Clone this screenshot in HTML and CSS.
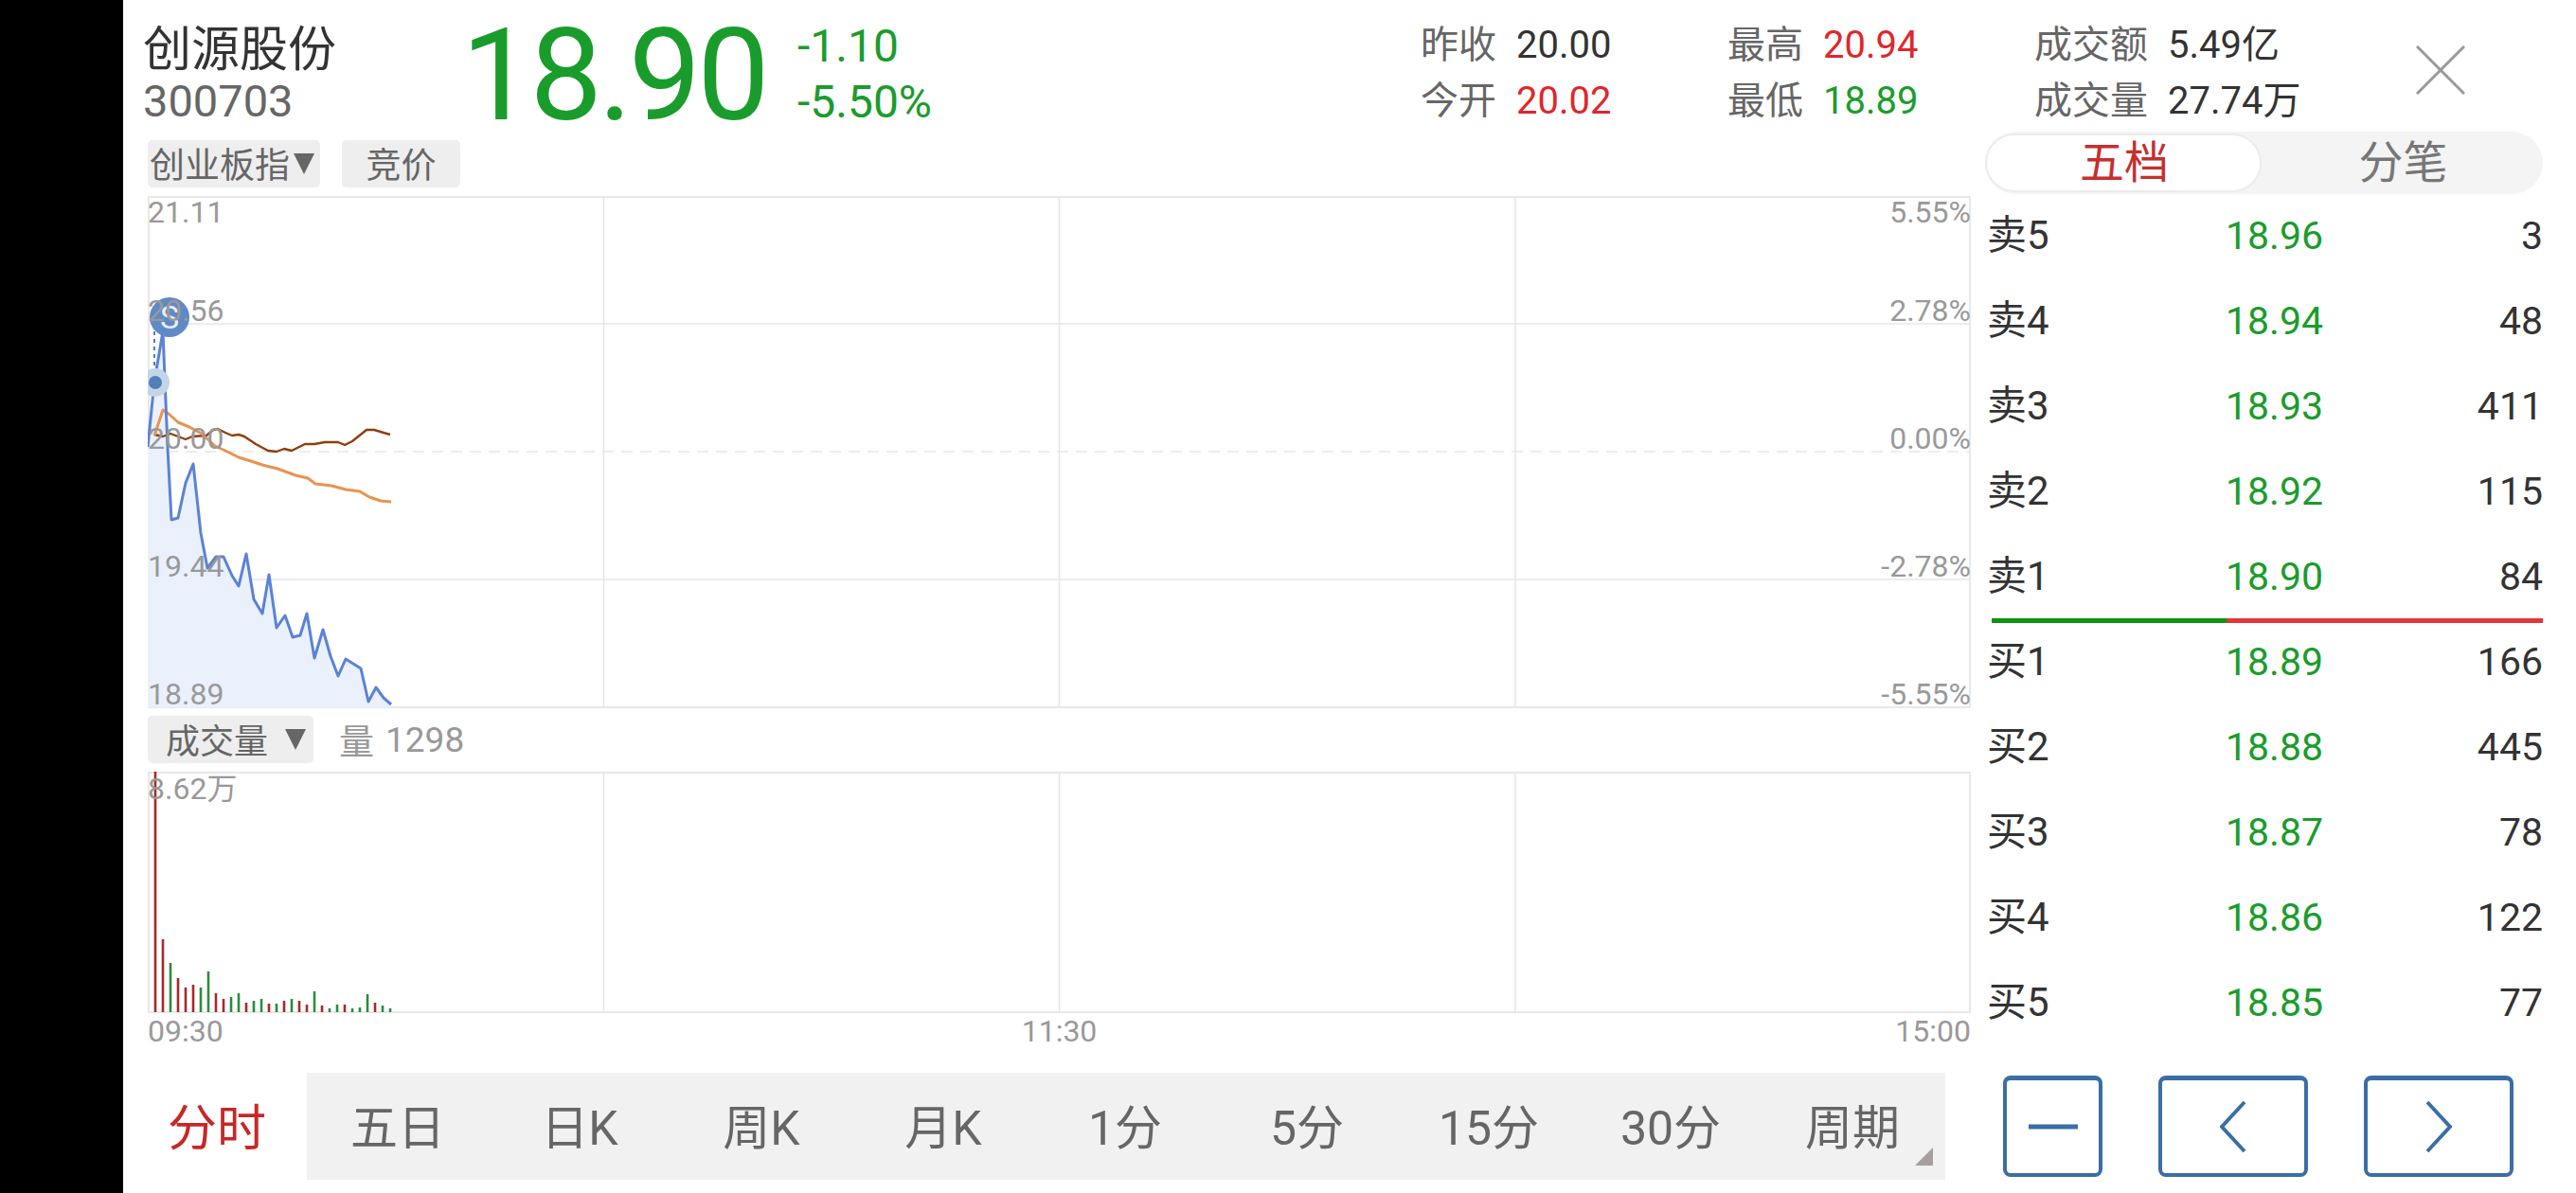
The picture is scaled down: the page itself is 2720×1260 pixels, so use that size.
FILE: index.html
```html
<!DOCTYPE html>
<html lang="zh-CN">
<head>
    <meta charset="UTF-8">
    <title>创源股份 300703</title>
    <link rel="stylesheet" href="styles.css">
</head>
<body>
    <div class="bezel"></div>
    <div class="app">
        <!-- quote header -->
        <header class="head">
            <div class="name-block">
                <div class="stock-name">创源股份</div>
                <div class="stock-code">300703</div>
            </div>
            <div class="last-price">18.90</div>
            <div class="change">
                <div>-1.10</div>
                <div>-5.50%</div>
            </div>
            <div class="stats">
                <div class="stat"><span class="stat-label">昨收</span><span class="stat-val">20.00</span></div>
                <div class="stat"><span class="stat-label">最高</span><span class="stat-val up">20.94</span></div>
                <div class="stat"><span class="stat-label">成交额</span><span class="stat-val">5.49亿</span></div>
                <div class="stat"><span class="stat-label">今开</span><span class="stat-val up">20.02</span></div>
                <div class="stat"><span class="stat-label">最低</span><span class="stat-val down">18.89</span></div>
                <div class="stat"><span class="stat-label">成交量</span><span class="stat-val">27.74万</span></div>
            </div>
            <button class="close" aria-label="关闭">
                <svg width="52" height="52" viewBox="0 0 52 52"><path d="M1 1L51 51M51 1L1 51"/></svg>
            </button>
        </header>

        <div class="main">
            <section class="charts">
                <div class="tags">
                    <div class="tag tag-index">创业板指<i class="caret"></i></div>
                    <div class="tag tag-auction">竞价</div>
                </div>

                <!-- price chart -->
                <div class="chart price-chart">
                    <svg width="1925" height="541" viewBox="0 0 1925 541">
                        <path class="grid-line" d="M481.5 0V541M962.5 0V541M1444 0V541M0 135H1925M0 405H1925"/>
                        <path class="grid-zero" d="M0 270H1925"/>
                        <polygon class="price-area" points="0,270 7,196 16,143 21,266 25,342 32,340 40,303 48,283 56,356 63,393 72,381 80,381 89,401 96,412 104,378 112,426 121,441 128,400 136,456 145,443 153,466 161,464 168,441 176,488 185,458 193,486 201,507 209,489 225,499 233,534 241,519 249,530 257,537 257,540 0,540"/>
                        <polyline class="line-avg5" points="7,252 16,254 24,251 32,254 40,257 47,254 62,253 69,247 74,246 82,250 89,253 96,252 102,254 114,262 127,269 136,270 144,267 152,269 166,262 176,262 187,260 201,260 208,263 216,259 231,247 239,247 249,250 256,252"/>
                        <polyline class="line-avg" points="7,253 16,226 22,230 32,239 44,244 57,251 71,264 82,269 96,276 109,280 121,284 137,288 156,295 169,298 177,304 194,306 209,310 224,312 234,318 246,322 257,323"/>
                        <polyline class="line-price" points="0,265 7,196 16,143 21,266 25,342 32,340 40,303 48,283 56,356 63,393 72,381 80,381 89,401 96,412 104,378 112,426 121,441 128,400 136,456 145,443 153,466 161,464 168,441 176,488 185,458 193,486 201,507 209,489 225,499 233,534 241,519 249,530 257,537"/>
                        <path class="mark-stem" d="M7 143V196"/>
                        <circle class="mark-halo" cx="8" cy="197" r="15"/>
                        <circle class="mark-dot" cx="8" cy="197" r="7"/>
                        <circle class="mark-sell" cx="23" cy="128" r="21"/>
                        <text class="mark-letter" x="23" y="140">S</text>
                    </svg>
                    <span class="y-label left y0">21.11</span>
                    <span class="y-label left y1">20.56</span>
                    <span class="y-label left y2">20.00</span>
                    <span class="y-label left y3">19.44</span>
                    <span class="y-label left y4">18.89</span>
                    <span class="y-label right y0">5.55%</span>
                    <span class="y-label right y1">2.78%</span>
                    <span class="y-label right y2">0.00%</span>
                    <span class="y-label right y3">-2.78%</span>
                    <span class="y-label right y4">-5.55%</span>
                </div>

                <div class="vol-head">
                    <div class="tag tag-vol">成交量<i class="caret"></i></div>
                    <div class="vol-now"><span>量</span><span>1298</span></div>
                </div>

                <!-- volume chart -->
                <div class="chart vol-chart">
                    <svg width="1925" height="255" viewBox="0 0 1925 255">
                        <path class="grid-line" d="M481.5 0V255M962.5 0V255M1444 0V255"/>
                        <path class="vol-up" d="M8 0V254M16 177V254M32 218V254M40 228V254M48 225V254M72 234V254M80 240V254M104 244V254M128 245V254M144 242V254M160 242V254M168 246V254M184 247V254M208 246V254M240 244V254"/>
                        <path class="vol-down" d="M24 202V254M56 228V254M64 211V254M88 238V254M96 234V254M112 242V254M120 240V254M136 245V254M152 240V254M176 232V254M192 250V254M200 246V254M216 250V254M224 249V254M232 235V254M248 247V254M256 250V254"/>
                    </svg>
                    <span class="y-label left vol-max">8.62万</span>
                </div>

                <div class="time-axis">
                    <span>09:30</span>
                    <span>11:30</span>
                    <span>15:00</span>
                </div>
            </section>

            <!-- order book -->
            <aside class="book">
                <div class="switch">
                    <div class="switch-item active">五档</div>
                    <div class="switch-item">分笔</div>
                </div>
                <div class="book-rows">
                    <div class="book-row"><span class="side">卖5</span><span class="down">18.96</span><span class="qty">3</span></div>
                    <div class="book-row"><span class="side">卖4</span><span class="down">18.94</span><span class="qty">48</span></div>
                    <div class="book-row"><span class="side">卖3</span><span class="down">18.93</span><span class="qty">411</span></div>
                    <div class="book-row"><span class="side">卖2</span><span class="down">18.92</span><span class="qty">115</span></div>
                    <div class="book-row"><span class="side">卖1</span><span class="down">18.90</span><span class="qty">84</span></div>
                    <div class="book-split"><i class="split-sell"></i><i class="split-buy"></i></div>
                    <div class="book-row"><span class="side">买1</span><span class="down">18.89</span><span class="qty">166</span></div>
                    <div class="book-row"><span class="side">买2</span><span class="down">18.88</span><span class="qty">445</span></div>
                    <div class="book-row"><span class="side">买3</span><span class="down">18.87</span><span class="qty">78</span></div>
                    <div class="book-row"><span class="side">买4</span><span class="down">18.86</span><span class="qty">122</span></div>
                    <div class="book-row"><span class="side">买5</span><span class="down">18.85</span><span class="qty">77</span></div>
                </div>
            </aside>
        </div>

        <!-- period bar and nav buttons -->
        <footer class="foot">
            <div class="period-now">分时</div>
            <div class="periods">
                <span>五日</span>
                <span>日K</span>
                <span>周K</span>
                <span>月K</span>
                <span>1分</span>
                <span>5分</span>
                <span>15分</span>
                <span>30分</span>
                <span>周期</span>
                <i class="corner"></i>
            </div>
            <div class="nav">
                <button class="nav-btn small" aria-label="收起">
                    <svg width="52" height="6" viewBox="0 0 52 6"><path d="M0 3H52"/></svg>
                </button>
                <button class="nav-btn" aria-label="上一个">
                    <svg width="28" height="56" viewBox="0 0 28 56"><path d="M26 2L2 28L26 54"/></svg>
                </button>
                <button class="nav-btn" aria-label="下一个">
                    <svg width="28" height="56" viewBox="0 0 28 56"><path d="M2 2L26 28L2 54"/></svg>
                </button>
            </div>
        </footer>
    </div>
</body>
</html>
```

FILE: styles.css
```css
* {
    margin: 0;
    padding: 0;
    box-sizing: border-box;
}

body {
    display: flex;
    width: 2720px;
    height: 1260px;
    overflow: hidden;
    background: #fff;
    color: #333;
    font-family: Roboto, "Noto Sans CJK SC", sans-serif;
}

.bezel {
    width: 130px;
    background: #000;
}

.app {
    width: 2590px;
}

.up {
    color: #e0262b;
}

.down {
    color: #1a9c2c;
}

/* Header */
.head {
    display: flex;
    height: 139px;
}

.name-block {
    width: 357px;
    padding: 21px 0 0 21px;
}

.stock-name {
    font-size: 51px;
    line-height: 63px;
    color: #333;
}

.stock-code {
    font-size: 47px;
    line-height: 46px;
    color: #666;
}

.last-price {
    width: 355px;
    padding-top: 12px;
    font-size: 136px;
    line-height: 136px;
    letter-spacing: -4px;
    color: #1a9c2c;
}

.change {
    width: 658px;
    padding-top: 19px;
    font-size: 48px;
    line-height: 59px;
    color: #1a9c2c;
}

.stats {
    display: grid;
    grid-template-columns: 324px 324px 403px;
    grid-auto-rows: 59px;
    align-items: center;
    width: 1051px;
    padding-top: 18px;
}

.stat {
    display: flex;
    gap: 21px;
    font-size: 40px;
    line-height: 59px;
}

.stat-label {
    color: #666;
}

.close {
    align-self: flex-start;
    margin-top: 48px;
    border: none;
    background: none;
    line-height: 0;
}

.close path {
    stroke: #999;
    stroke-width: 3;
    fill: none;
}

/* Charts column */
.main {
    display: flex;
    height: 994px;
}

.charts {
    width: 1951px;
    padding: 9px 0 0 26px;
}

.tags {
    display: flex;
    gap: 23px;
    height: 50px;
    margin-bottom: 9px;
}

.tag {
    display: flex;
    align-items: center;
    height: 50px;
    padding-bottom: 2px;
    border-radius: 5px;
    background: #eee;
    color: #666;
    font-size: 37px;
}

.tag-index {
    width: 182px;
    padding-left: 2px;
}

.tag-auction {
    width: 125px;
    justify-content: center;
}

.tag-vol {
    width: 175px;
    padding-left: 19px;
    font-size: 36px;
}

.caret {
    width: 0;
    height: 0;
    margin-top: 2px;
    margin-left: 18px;
    border-top: 22px solid #666;
    border-left: 11px solid transparent;
    border-right: 11px solid transparent;
}

.tag-index .caret {
    margin-left: 4px;
}

.chart {
    position: relative;
    width: 1925px;
    border: 2px solid #e8e8e8;
}

.chart svg {
    position: absolute;
    top: -2px;
    left: -2px;
}

.price-chart {
    height: 541px;
}

.vol-chart {
    height: 255px;
}

.grid-line {
    stroke: #e6e6e6;
    stroke-width: 1.5;
    fill: none;
}

.grid-zero {
    stroke: #e6e6e6;
    stroke-width: 1.5;
    stroke-dasharray: 12 8;
    fill: none;
}

.price-area {
    fill: #eaf1fd;
}

.line-price,
.line-avg,
.line-avg5 {
    fill: none;
    stroke-linejoin: round;
}

.line-price {
    stroke: #5b82d6;
    stroke-width: 3;
}

.line-avg {
    stroke: #e8934e;
    stroke-width: 3;
}

.line-avg5 {
    stroke: #8f3f0c;
    stroke-width: 2.4;
}

.mark-stem {
    stroke: #4f80b8;
    stroke-width: 2;
    stroke-dasharray: 4 4;
}

.mark-halo {
    fill: #c5d5e8;
}

.mark-dot {
    fill: #4f80b8;
}

.mark-sell {
    fill: #5f8ac7;
}

.mark-letter {
    fill: #e8eef7;
    font-size: 34px;
    text-anchor: middle;
}

.y-label {
    position: absolute;
    font-size: 32px;
    line-height: 32px;
    color: #999;
}

.y-label.left {
    left: -2px;
}

.y-label.right {
    right: -2px;
}

.y0 { top: -1px; }
.y1 { top: 103px; }
.y2 { top: 238px; }
.y3 { top: 373px; }
.y4 { top: 508px; }

.y-label.vol-max {
    top: 0;
}

.vol-head {
    display: flex;
    gap: 27px;
    height: 50px;
    margin: 8px 0 9px;
}

.vol-now {
    display: flex;
    align-items: center;
    gap: 12px;
    font-size: 37px;
    color: #999;
}

.vol-up,
.vol-down {
    stroke-width: 2.6;
    fill: none;
}

.vol-up {
    stroke: #a8282c;
}

.vol-down {
    stroke: #2e8b3e;
}

.time-axis {
    display: flex;
    justify-content: space-between;
    width: 1925px;
    padding-top: 1px;
    font-size: 32px;
    line-height: 36px;
    color: #999;
}

/* Order book */
.book {
    width: 589px;
    margin-left: 15px;
}

.switch {
    display: flex;
    height: 66px;
    border-radius: 33px;
    background: #f4f4f4;
    font-size: 47px;
    color: #777;
}

.switch-item {
    display: flex;
    align-items: center;
    justify-content: center;
    width: 297px;
    padding: 0 0 9px 2px;
}

.switch-item.active {
    width: 292px;
    margin: 2px 0;
    border: 2px solid #ececec;
    border-radius: 31px;
    background: #fff;
    color: #c62f2f;
}

.book-rows {
    margin-top: -2px;
}

.book-row {
    display: grid;
    grid-template-columns: 252px 104px 1fr;
    align-items: center;
    height: 90px;
    padding: 1px 0 0 2px;
    font-size: 41px;
}

.side,
.qty {
    color: #333;
}

.side {
    font-size: 42px;
    line-height: 42px;
}

.qty {
    text-align: right;
}

.book-split {
    display: flex;
    height: 5px;
    margin: 0 0 -5px 7px;
}

.split-sell {
    width: 248px;
    background: #0f9410;
}

.split-buy {
    flex: 1;
    background: #e5353a;
}

/* Footer */
.foot {
    display: flex;
    height: 113px;
}

.period-now {
    display: flex;
    align-items: center;
    justify-content: center;
    width: 194px;
    padding: 0 0 5px 4px;
    font-size: 52px;
    color: #c62828;
}

.periods {
    position: relative;
    display: grid;
    grid-template-columns: repeat(9, 192px);
    width: 1730px;
    background: #f1f1f1;
    font-size: 50px;
    color: #666;
}

.periods span {
    display: flex;
    align-items: center;
    justify-content: center;
    padding-bottom: 5px;
}

.corner {
    position: absolute;
    right: 13px;
    bottom: 15px;
    border-bottom: 19px solid #a79e9e;
    border-left: 19px solid transparent;
}

.nav {
    display: flex;
    gap: 59px;
    margin: 3px 0 0 61px;
}

.nav-btn {
    display: flex;
    align-items: center;
    justify-content: center;
    width: 158px;
    height: 107px;
    border: 4px solid #3a6ea5;
    border-top-width: 5px;
    border-radius: 8px;
    background: #fff;
}

.nav-btn.small {
    width: 105px;
}

.nav-btn path {
    stroke: #3a6ea5;
    stroke-width: 4;
    fill: none;
}

.nav-btn.small path {
    stroke-width: 5;
}
```
